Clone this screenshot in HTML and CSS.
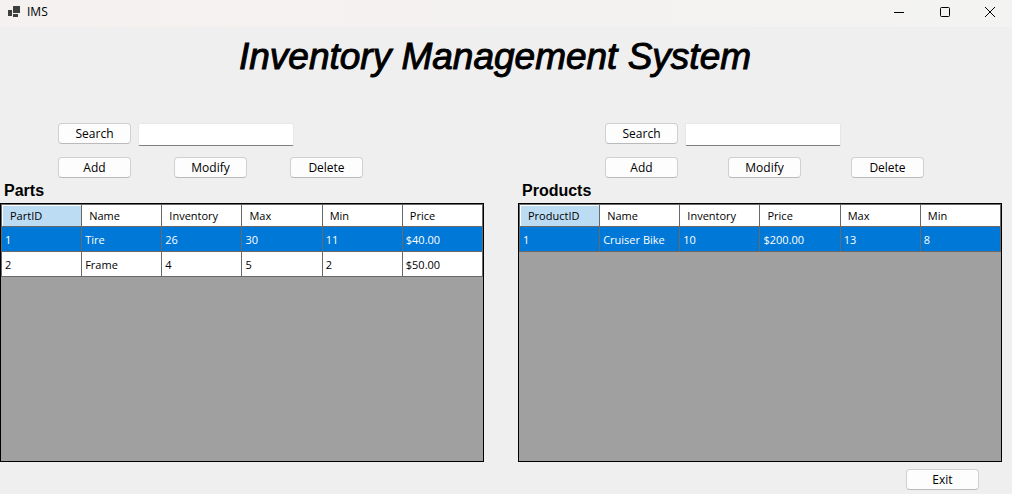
FILE: index.html
```html
<!DOCTYPE html>
<html lang="en">
<head>
<meta charset="utf-8">
<title>IMS</title>
<link rel="stylesheet" href="styles.css">
</head>
<body>
<header class="titlebar">
  <svg class="app-icon" width="12" height="11" viewBox="0 0 12 11" fill="#3f3f3f" aria-hidden="true"><path d="M5 0h7v7H5zM0 4h4v6H0zM5 8h5v3H5z"/></svg>
  <span class="app-name">IMS</span>
  <div class="window-controls">
    <button class="window-button" type="button" aria-label="Minimize"><svg width="12" height="12" viewBox="0 0 12 12" fill="none" stroke="#000"><path d="M1 6.5h10"/></svg></button>
    <button class="window-button" type="button" aria-label="Maximize"><svg width="12" height="12" viewBox="0 0 12 12" fill="none" stroke="#000"><rect x="1.5" y="1.5" width="9" height="9" rx="1"/></svg></button>
    <button class="window-button" type="button" aria-label="Close"><svg width="12" height="12" viewBox="0 0 12 12" fill="none" stroke="#000"><path d="M1 1l10 10M11 1L1 11"/></svg></button>
  </div>
</header>
<main class="content">
  <h1 class="page-title">Inventory Management System</h1>
  <div class="panels">
    <section class="panel panel-parts">
      <form class="search-row">
        <button class="button" type="button">Search</button>
        <input class="search-box" type="text" aria-label="Search parts">
      </form>
      <div class="actions">
        <button class="button" type="button">Add</button>
        <button class="button" type="button">Modify</button>
        <button class="button" type="button">Delete</button>
      </div>
      <h2 class="panel-title">Parts</h2>
      <div class="grid-view">
        <table class="grid">
          <thead><tr><th class="current">PartID</th><th>Name</th><th>Inventory</th><th>Max</th><th>Min</th><th>Price</th></tr></thead>
          <tbody>
            <tr class="selected"><td>1</td><td>Tire</td><td>26</td><td>30</td><td>11</td><td>$40.00</td></tr>
            <tr><td>2</td><td>Frame</td><td>4</td><td>5</td><td>2</td><td>$50.00</td></tr>
          </tbody>
        </table>
      </div>
    </section>
    <section class="panel panel-products">
      <form class="search-row">
        <button class="button" type="button">Search</button>
        <input class="search-box" type="text" aria-label="Search products">
      </form>
      <div class="actions">
        <button class="button" type="button">Add</button>
        <button class="button" type="button">Modify</button>
        <button class="button" type="button">Delete</button>
      </div>
      <h2 class="panel-title">Products</h2>
      <div class="grid-view">
        <table class="grid">
          <thead><tr><th class="current">ProductID</th><th>Name</th><th>Inventory</th><th>Price</th><th>Max</th><th>Min</th></tr></thead>
          <tbody>
            <tr class="selected"><td>1</td><td>Cruiser Bike</td><td>10</td><td>$200.00</td><td>13</td><td>8</td></tr>
          </tbody>
        </table>
      </div>
    </section>
  </div>
  <footer class="footer"><button class="button" type="button">Exit</button></footer>
</main>
</body>
</html>
```
FILE: styles.css
```css
* {
  box-sizing: border-box;
}

body {
  margin: 0;
  min-height: 100vh;
  display: flex;
  flex-direction: column;
  background: #efefef;
  color: #000;
  font: 12px/16px "Open Sans", "Noto Sans", sans-serif;
}

.titlebar {
  display: flex;
  align-items: center;
  height: 27px;
  padding: 0 0 4px 8px;
  background: linear-gradient(90deg, #f5f1f0, #f3f3f1);
}

.app-icon {
  margin-right: 7px;
}

.app-name {
  font-size: 12px;
}

.window-controls {
  display: flex;
  margin-left: auto;
}

.window-button {
  display: grid;
  place-items: center;
  width: 46px;
  height: 22px;
  padding: 0;
  border: 0;
  background: none;
}

.window-controls .window-button:last-child {
  width: 44px;
}

.content {
  flex: 1;
  display: flex;
  flex-direction: column;
  padding: 9px 10px 4px 0;
}

.page-title {
  margin: 0 0 45px;
  padding-right: 12px;
  text-align: center;
  font: italic 400 37px/42px "Liberation Sans", Arial, sans-serif;
  -webkit-text-stroke: 1px #000;
}

.panels {
  flex: 1;
  display: grid;
  grid-template-columns: 1fr 1fr;
  gap: 34px;
}

.panel {
  display: flex;
  flex-direction: column;
  --indent: 58px;
  --action-gap: 43px;
}

.panel-products {
  --indent: 87px;
  --action-gap: 50px;
}

.search-row {
  display: flex;
  gap: 7px;
  height: 24px;
  margin: 0 0 10px;
  padding-left: var(--indent);
}

.actions {
  display: flex;
  gap: var(--action-gap);
  padding-left: var(--indent);
}

.button {
  width: 73px;
  height: 21px;
  margin: 0;
  padding: 0;
  border: 1px solid #d0d0d0;
  border-bottom-color: #bababa;
  border-radius: 4px;
  background: #fdfdfd;
  color: #000;
  font: 12px/16px "Open Sans", "Noto Sans", sans-serif;
}

.search-box {
  width: 156px;
  height: 23px;
  padding: 2px 4px;
  border: 1px solid #e7e7e7;
  border-bottom-color: #808080;
  border-radius: 2px;
  background: #fff;
  font: inherit;
}

.panel-title {
  margin: 0;
  padding: 3px 4px;
  font: 700 16px/19px "Liberation Sans", Arial, sans-serif;
}

.grid-view {
  flex: 1;
  border: 1px solid #000;
  background: #a0a0a0;
}

.grid {
  width: 100%;
  table-layout: fixed;
  border-collapse: collapse;
  background: #fff;
  font-size: 11px;
}

.grid th,
.grid td {
  height: 25px;
  padding: 1px 3px 0;
  border: 1px solid #696969;
  text-align: left;
  font-weight: 400;
  line-height: 16px;
  white-space: nowrap;
}

.grid th {
  height: 22px;
  padding: 0 7px;
}

.grid .current {
  padding-left: 8px;
  background: #bcdcf4;
  box-shadow: inset 1px 1px #fff;
}

.grid .selected td {
  background: #0078d7;
  color: #fff;
}

.footer {
  display: flex;
  justify-content: flex-end;
  padding: 7px 23px 0 0;
}
```
